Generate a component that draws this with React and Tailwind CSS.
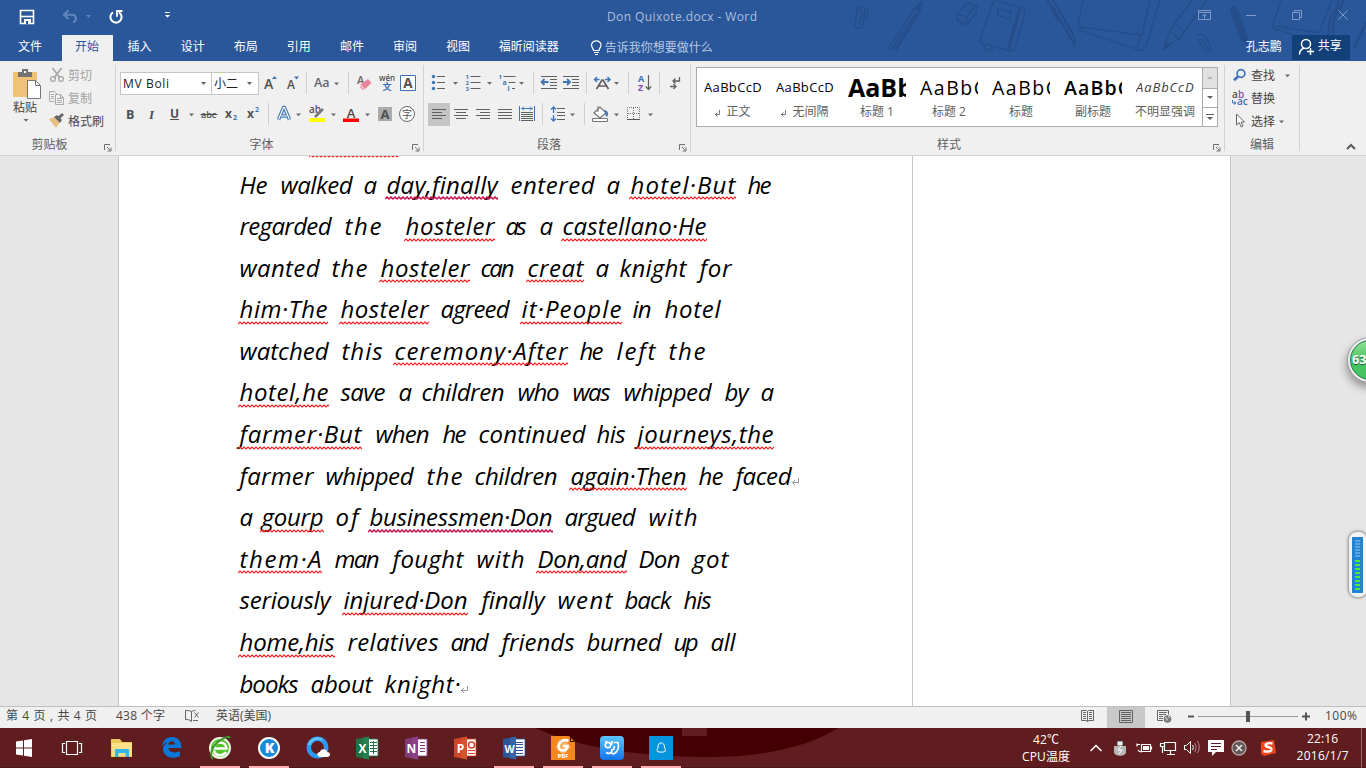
import React, { useLayoutEffect, useRef } from "react";

const UI = "font-['Open_Sans','Noto_Sans_CJK_SC',sans-serif]";

function Fit({ w, className = "", children }) {
  const ref = useRef(null);
  useLayoutEffect(() => {
    const el = ref.current;
    el.style.letterSpacing = "0px";
    const natural = el.getBoundingClientRect().width;
    const n = Math.max(1, Array.from(el.textContent).length - 1);
    el.style.letterSpacing = (w - natural) / n + "px";
  }, [w, children]);
  return (
    <span className={"inline-block shrink-0 whitespace-pre " + className} style={{ width: w }}>
      <span ref={ref} className="inline-block">{children}</span>
    </span>
  );
}

/* Icon whose drawing uses window coordinates */
function G({ x, y, w, h, children, className = "" }) {
  return (
    <svg width={w} height={h} viewBox={`${x} ${y} ${w} ${h}`} className={"block shrink-0 " + className} fill="none">
      {children}
    </svg>
  );
}
const A = (p) => <G y={70} h={27} {...p} />;
const B = (p) => <G y={101} h={26} {...p} />;

const Arrow = ({ x, y, c = "#6a6a6a" }) => <path d={`M${x - 2.5} ${y - 1}h5l-2.5 2.8z`} fill={c} />;
const VLine = ({ x, y1, y2, c = "#d0d0d0" }) => <path d={`M${x} ${y1}V${y2}`} stroke={c} />;
const Lines = ({ rows, c = "#606060" }) => (
  <path d={rows.map(([x, y, w]) => `M${x} ${y}h${w}`).join("")} stroke={c} strokeWidth="1" />
);
const Tx = ({ x, y, s = 12, c = "#505050", b, i, children, anchor, st }) => (
  <text x={x} y={y} fontSize={s} fill={c} fontWeight={b || 400} fontStyle={i ? "italic" : "normal"} textAnchor={anchor} stroke={st} fontFamily="Open Sans, Noto Sans CJK SC, sans-serif">{children}</text>
);

function Launcher() {
  return (
    <svg width="8" height="8" viewBox="0 0 8 8" fill="none" stroke="#6f6f6f">
      <path d="M.5 6V.5H6M3 3l3.500 3.500M7 3.500V7H3.500" />
    </svg>
  );
}

function GroupLabel({ label, launcher, pad = "pr-0" }) {
  return (
    <div className="mt-[9px] flex h-[18px] items-center">
      <div className={"flex-1 text-center text-[12px] leading-[18px] text-[#606060] " + pad}>{label}</div>
      {launcher && <div className="mr-[3px] mt-[5px] shrink-0"><Launcher /></div>}
    </div>
  );
}

function TitleBar() {
  return (
    <div className="relative z-10 flex h-[35px] items-center">
      <G x={0} y={0} w={180} h={35}>
        <path d="M20.500 10.500h13v13h-13z" stroke="#fff" strokeWidth="1.600" />
        <path d="M21 16.500h12" stroke="#fff" strokeWidth="1.600" />
        <path d="M24 19h7v5h-7z" fill="#fff" /><path d="M26 21h2v3h-2z" fill="#2a579a" />
        <path d="M68.500 10.500l-4.500 4.300 4.500 4.300M64.500 14.800h7.500c5 0 5 6.500 1 7.400" stroke="#6186bb" strokeWidth="2.100" />
        <path d="M86 15h5l-2.500 2.800z" fill="#6186bb" />
        <path d="M113 12.300a5.600 5.600 0 1 0 6 0" stroke="#fff" strokeWidth="2" />
        <path d="M117 16.800v-5.800h5.500" stroke="#fff" strokeWidth="1.800" />
        <path d="M165 15h5l-2.500 2.800z" fill="#fff" />
        <path d="M165 12.500h5" stroke="#fff" />
      </G>
      <Fit w={150} className="ml-[427px] mt-[-2px] text-[12px] leading-[16px] text-[#acbfdc]">Don Quixote.docx - Word</Fit>
      <G x={1190} y={0} w={170} h={35} className="ml-[433px]">
        <g stroke="#7e9bc7">
          <path d="M1198.500 10.500h12v9h-12zM1198.500 12.500h12M1204.500 18.500v-4M1202.500 16l2-2 2 2" />
          <path d="M1246 15.500h10M1292.500 12.500h7v7h-7zM1294.500 12v-1.500h7v7h-2M1338.500 10.500l9 9M1347.500 10.500l-9 9" />
        </g>
      </G>
    </div>
  );
}

function Doodles() {
  return (
    <svg className="absolute left-0 top-0" width="1366" height="61" viewBox="0 0 1366 61" fill="none" stroke="#244d8a" strokeWidth="1.300">
      <path d="M856 10c2-5 8-5 9-1l-2 16c-2 5-9 4-8-2l2-11c2-4 6-2 5 1l-2 9M868 8l-2 14" />
      <path d="M887 51l26-40 8-8-2 10-23 38M891 51l25-38M894 51l24-38" />
      <path d="M915 8l6-5-1 8z" fill="#244d8a" />
      <path d="M957 14l10-11 10 3-1 8-10 11-9-5zM957 14l10 3 9-12M967 17l-1 7" />
      <path d="M994 0l-15 42 31 9c2 0 4-1 5-3l10-35c0-3-2-5-4-6zM998 9l13 3-1 7-12-3zM983 43l3 8 3-2 4 2-4-7" />
      <path d="M1020 8l-12 42" strokeWidth="3" />
      <path d="M1047 0l18 28 10 18-1-10-21-36" strokeWidth="2" /><path d="M1052 8l8 14" strokeWidth="4" />
      <path d="M1083 0l-5 25c0 3 1 5 4 6l57 19c4 1 6-1 7-4l14-46M1080 27l62 8 8-35M1140 35l-3 14" />
      <path d="M1192 0l-22 30-6 18 16-10 27-38M1170 31l9 8M1175 24l10 8" /><path d="M1166 43l-1 6 5-4z" fill="#244d8a" />
      <path d="M1197 36c2-3 7-2 9 2l5 10c0 4-5 4-7 1l-6-10M1201 38l6 10" />
      <path d="M1234 10l10 28" strokeWidth="8" strokeLinecap="round" /><path d="M1244 36l6 15" strokeWidth="3" />
      <path d="M1281 0l-8 24c-1 3 1 5 5 6l50 15M1276 26l43 7 13-33" />
      <path d="M1338 0c2 12-10 13-9 25s-5 18-3 30M1343 0c-3 13-11 15-10 27s-4 18-3 30M1366 22l-12 27" strokeWidth="2" />
    </svg>
  );
}

const tabs = ["插入", "设计", "布局", "引用", "邮件", "审阅", "视图"];

function Header() {
  return (
    <header className="relative h-[61px] bg-[#2a579a]">
      <Doodles />
      <TitleBar />
      <nav className="relative z-10 flex h-[26px] text-[12px] leading-[24px] text-white">
        <div className="w-[62px] shrink-0 pr-[2px] text-center">文件</div>
        <div className="w-[51px] shrink-0 bg-[#f0f0f0] pr-px text-center text-[#2a579a]">开始</div>
        {tabs.map((t) => <div key={t} className="w-[53.100px] shrink-0 text-center">{t}</div>)}
        <div className="ml-[14px] w-[76px] shrink-0">福昕阅读器</div>
        <G x={576} y={35} w={29} h={26} className="ml-[14px] -translate-x-[10px]">
          <path d="M600.500 50.500c0-2-2-3-2-5.500a4.800 4.800 0 0 1 9.500 0c0 2.500-2 3.500-2 5.500z" stroke="none" />
          <path d="M590.500 50.500c0-2-2-3-2-5.500a4.800 4.800 0 0 1 9.500 0c0 2.500-2 3.500-2 5.500z" stroke="#fff" strokeWidth="1.200" />
          <path d="M591 52.500h5M592 54.500h3" stroke="#fff" strokeWidth="1.200" />
        </G>
        <div className="-ml-[13px] mt-[1px] w-[641px] shrink-0 text-[#b9cae4]">告诉我你想要做什么</div>
        <div className="w-[46px] shrink-0">孔志鹏</div>
        <div className="flex h-[25px] w-[58px] shrink-0 bg-[#124078]">
          <G x={1292} y={35} w={26} h={25}>
            <circle cx="1306" cy="44" r="4.500" stroke="#fff" strokeWidth="1.500" />
            <path d="M1299.500 54.500c0-4 2-5.500 4.500-6.500M1307 51.500h7M1310.500 48v7" stroke="#fff" strokeWidth="1.500" />
          </G>
          <span className="leading-[21px]">共享</span>
        </div>
      </nav>
    </header>
  );
}

function ClipboardGroup() {
  return (
    <div className="h-[94px] w-[115px] shrink-0">
      <div className="flex h-[66px]">
        <div className="flex w-[48px] flex-col items-center pt-[6px] text-[12px] text-[#444]">
          <G x={0} y={67} w={48} h={34}>
            <path d="M13 72h24v25H13z" fill="#eec377" />
            <path d="M18 72h14v5H18z" fill="#737373" /><path d="M22 69h6v4h-6z" fill="#737373" /><path d="M24 71h2v2h-2z" fill="#fff" />
            <path d="M27.500 80.500h8l5 5v13h-13z" fill="#fff" stroke="#777" /><path d="M35.500 80.500v5h5" stroke="#777" />
          </G>
          <div className="mr-[-2px] mt-[-1px] leading-[16px]">粘贴</div>
          <G x={18} y={118} w={16} h={8} className="mr-[-4px]"><Arrow x={26} y={122} /></G>
        </div>
        <div className="flex w-[67px] flex-col pt-[3px] text-[12px] leading-[23px]">
          <div className="flex h-[23px] text-[#a2a2a2]">
            <G x={48} y={64} w={20} h={23}><path d="M52.500 68l7.500 10M61.500 68L54 78" stroke="#a9a9a9" strokeWidth="1.800" /><circle cx="53" cy="79" r="2.400" stroke="#a9a9a9" strokeWidth="1.300" /><circle cx="61" cy="79" r="2.400" stroke="#a9a9a9" strokeWidth="1.300" /></G>剪切
          </div>
          <div className="flex h-[23px] text-[#a2a2a2]">
            <G x={48} y={87} w={20} h={23}><g stroke="#ababab"><path d="M54.500 101.500h-5v-10h5l3 3M51 94.500h3M51 96.500h3M51 98.500h3" /><path d="M55.500 94.500h5l3 3v7h-8zM57 98.500h5M57 100.500h5M57 102.500h5M60.500 94.500v3h3" fill="#f0f0f0" /></g></G>复制
          </div>
          <div className="flex h-[23px] text-[#444]">
            <G x={48} y={110} w={20} h={23}><path d="M49 119l6-2 5 5-4 6c-2-3-5-6-7-9z" fill="#e8bf80" /><path d="M54 117l3-2 5 5-2 3z" fill="#666" /><path d="M58.500 118l4.500-4" stroke="#666" strokeWidth="3" /></G>格式刷
          </div>
        </div>
      </div>
      <GroupLabel label="剪贴板" launcher pad="pr-[5px]" />
    </div>
  );
}

function FontGroup() {
  return (
    <div className="h-[94px] w-[307px] shrink-0 pt-[9px]">
      <div className="flex h-[27px] items-center">
        <div className="ml-[4px] flex h-[23px] w-[92px] shrink-0 items-center border border-[#c6c6c6] bg-white pl-[2px] text-[12px] text-[#222]">
          <Fit w={46} className="leading-[16px]">MV Boli</Fit>
          <svg className="ml-[31px] shrink-0" width="7" height="4"><path d="M1 0h5L3.500 3z" fill="#666" /></svg>
        </div>
        <div className="flex h-[23px] w-[47px] shrink-0 items-center border border-l-0 border-[#c6c6c6] bg-white pl-[2px] text-[12px] text-[#222]">
          <span className="w-[32px]">小二</span>
          <svg width="7" height="4"><path d="M1 0h5L3.500 3z" fill="#666" /></svg>
        </div>
        <A x={259} w={24}><Tx x={264} y={89} s={14} b={600}>A</Tx><path d="M272 79h5l-2.500-3z" fill="#3f74b5" /></A>
        <A x={283} w={26}><Tx x={287} y={89} s={12} b={600}>A</Tx><path d="M294 76.500h5l-2.500 3z" fill="#3f74b5" /><VLine x={306.500} y1={72} y2={94} /></A>
        <A x={309} w={45}><Tx x={314} y={87} s={12.500} b={600} c="#666">Aa</Tx><Arrow x={336.500} y={83.500} /><VLine x={348.500} y1={72} y2={94} /></A>
        <A x={354} w={22}><Tx x={357} y={84} s={11} b={600} c="#666">A</Tx><path d="M361 84l7-5 3.500 4-7 6.500-2.500 0-2-2.500z" fill="#e8839a" /><path d="M360 84.500l4.500 5" stroke="#f6ccd4" strokeWidth="1.500" /></A>
        <A x={376} w={22}><Tx x={387} y={81} s={8} anchor="middle" b={600}>wén</Tx><Tx x={387} y={90} s={9} anchor="middle" b={700} c="#3f74b5">文</Tx></A>
        <A x={398} w={22}><path d="M400.500 75.500h15v15h-15z" fill="#fff" stroke="#3f74b5" /><Tx x={408} y={88} s={13.500} anchor="middle" b={700}>A</Tx></A>
      </div>
      <div className="mt-[4px] flex h-[26px]">
        <B x={116} w={26}><Tx x={126} y={118.500} s={12.500} b={700}>B</Tx></B>
        <B x={142} w={22}><text x="149" y="118.500" fontSize="13" fontWeight="700" fontStyle="italic" fill="#505050" fontFamily="Liberation Serif, serif">I</text></B>
        <B x={164} w={34}><Tx x={170} y={118} s={12} b={700}>U</Tx><Lines rows={[[170, 119.500, 9]]} c="#505050" /><Arrow x={191.500} y={114.500} /></B>
        <B x={198} w={24}><Tx x={201} y={118} s={9} b={600}>abc</Tx><Lines rows={[[200.500, 114.500, 17]]} c="#505050" /></B>
        <B x={222} w={22}><Tx x={225} y={118} s={12} b={700}>x</Tx><Tx x={233} y={120} s={7} b={700} c="#3f74b5">2</Tx></B>
        <B x={244} w={28}><Tx x={247} y={118} s={12} b={700}>x</Tx><Tx x={255} y={112} s={7} b={700} c="#3f74b5">2</Tx><VLine x={268.500} y1={103} y2={125} /></B>
        <B x={272} w={34}><path d="M278.500 120l5.500-13 5.500 13M280.500 116h7" stroke="#b4d0f0" strokeWidth="4" strokeLinejoin="round" /><path d="M278.500 119.500l5-12h1l5 12M281 116h6" stroke="#3a6ea8" strokeWidth="3.200" strokeLinejoin="round" /><path d="M278.500 119.500l5-12h1l5 12M281 116h6" stroke="#fff" strokeWidth="1.200" /><Arrow x={298.500} y={114.500} /></B>
        <B x={306} w={34}><Tx x={309} y={113} s={10} b={600}>ab</Tx><path d="M315 117l8-8" stroke="#777" strokeWidth="2.500" /><path d="M309 118h16v4h-16z" fill="#ff0" /><Arrow x={333.500} y={114.500} /></B>
        <B x={340} w={36}><Tx x={351} y={117.500} s={13} b={600} anchor="middle">A</Tx><path d="M343 118.500h16v3.500h-16z" fill="#f00" /><Arrow x={367.500} y={114.500} /></B>
        <B x={376} w={20}><path d="M378 107h14v14h-14z" fill="#ababab" /><Tx x={385} y={118.500} s={13} b={700} anchor="middle">A</Tx></B>
        <B x={396} w={24}><circle cx="407" cy="114" r="7.500" fill="#fff" stroke="#666" /><Tx x={407} y={117.800} s={10} anchor="middle">字</Tx></B>
      </div>
      <GroupLabel label="字体" launcher pad="pr-[5px]" />
    </div>
  );
}

const blue = "#3f74b5";
function ParagraphGroup() {
  return (
    <div className="h-[94px] w-[266px] shrink-0 pt-[9px]">
      <div className="flex h-[27px]">
        <A x={424} w={38}><Lines rows={[[437, 76.500, 8], [437, 82.500, 8], [437, 88.500, 8]]} />{[76.500, 82.500, 88.500].map((y) => <circle key={y} cx="433.500" cy={y} r="1.700" fill={blue} />)}<Arrow x={455.500} y={83} /></A>
        <A x={462} w={34}><Lines rows={[[470.500, 76.500, 10], [470.500, 82.500, 10], [470.500, 88.500, 10]]} /><Tx x={465.500} y={79} s={6} b={700} c={blue}>1</Tx><Tx x={465.500} y={85} s={6} b={700} c={blue}>2</Tx><Tx x={465.500} y={91} s={6} b={700} c={blue}>3</Tx><Arrow x={489.500} y={83} /></A>
        <A x={496} w={40}><Lines rows={[[503.500, 76.500, 12], [508.500, 82.500, 7], [512, 88.500, 3]]} /><Tx x={498.500} y={79} s={6} b={700} c={blue}>1</Tx><Tx x={502.500} y={84.500} s={7} b={700} c={blue}>a</Tx><Tx x={507.500} y={90.500} s={7} b={700} c={blue}>i</Tx><Arrow x={521.500} y={83} /><VLine x={533.500} y1={72} y2={94} /></A>
        <A x={536} w={25}><Lines rows={[[541, 76.500, 16], [550, 79.500, 7], [550, 82.500, 7], [550, 85.500, 7], [541, 88.500, 16]]} /><path d="M541.500 82h7M544.500 79l-3 3 3 3" stroke={blue} strokeWidth="1.800" /></A>
        <A x={561} w={28}><Lines rows={[[563, 76.500, 16], [572, 79.500, 7], [572, 82.500, 7], [572, 85.500, 7], [563, 88.500, 16]]} /><path d="M563 82h7M567 79l3 3-3 3" stroke={blue} strokeWidth="1.800" /><VLine x={586.500} y1={72} y2={94} /></A>
        <A x={589} w={42}><path d="M596.500 89l5.500-9h1l5.500 9M598.500 86h8" stroke="#606060" strokeWidth="1.700" /><path d="M594.500 79.500h5M597 77l-2.500 2.500L597 82M605 79.500h5M607.500 77l2.500 2.500-2.500 2.500" stroke={blue} strokeWidth="1.400" /><Arrow x={616.500} y={83} /><VLine x={628.500} y1={72} y2={94} /></A>
        <A x={631} w={31}><Tx x={638} y={81.500} s={9} b={700} c={blue}>A</Tx><Tx x={638} y={90.500} s={9} b={700} c="#8c4fa8">Z</Tx><path d="M648.500 75v14M645.800 86.500l2.700 3 2.700-3" stroke="#606060" strokeWidth="1.200" /><VLine x={659.500} y1={72} y2={94} /></A>
        <A x={662} w={28}><path d="M679.500 77v4h-6M675.500 78.500l-2.500 2.500 2.500 2.500M670 86.500h6M673.500 84l2.500 2.500-2.500 2.500" stroke="#606060" strokeWidth="1.300" /></A>
      </div>
      <div className="mt-[4px] flex h-[26px]">
        <B x={424} w={27}><path d="M428 103h22v23h-22z" fill="#c5c5c5" /><Lines rows={[[432, 109.500, 14], [432, 112.500, 10], [432, 115.500, 14], [432, 118.500, 10]]} /></B>
        <B x={451} w={22}><Lines rows={[[454, 109.500, 14], [456, 112.500, 10], [454, 115.500, 14], [456, 118.500, 10]]} /></B>
        <B x={473} w={22}><Lines rows={[[476, 109.500, 14], [480, 112.500, 10], [476, 115.500, 14], [480, 118.500, 10]]} /></B>
        <B x={495} w={22}><Lines rows={[[498, 109.500, 14], [498, 112.500, 14], [498, 115.500, 14], [498, 118.500, 14]]} /></B>
        <B x={517} w={29}><Lines rows={[[521, 112.500, 12], [521, 114.500, 12], [521, 116.500, 12], [521, 118.500, 12], [521, 120.500, 12]]} /><path d="M519.500 106v15M534.500 106v15M521.500 108.500h11M524 106.500l-2 2 2 2M530 106.500l2 2-2 2" stroke={blue} /><VLine x={542.500} y1={103} y2={125} /></B>
        <B x={546} w={41}><path d="M553.500 107v14M551 109.500l2.500-2.500 2.500 2.500M551 118.500l2.500 2.500 2.500-2.500" stroke={blue} strokeWidth="1.300" /><path d="M552 114h3" stroke="#f0f0f0" strokeWidth="2" /><Lines rows={[[557, 108.500, 8], [557, 112.500, 8], [557, 115.500, 8], [557, 119.500, 8]]} /><Arrow x={572.500} y={114.500} /><VLine x={584.500} y1={103} y2={125} /></B>
        <B x={587} w={36}><path d="M594 113l6-6 6 6-6 5z" fill="#fff" stroke="#707070" strokeWidth="1.200" /><path d="M598 106v6" stroke="#707070" /><path d="M604 110c4 0 5 4 3 7-2-1-1-4-3-7z" fill={blue} /><path d="M592.500 118.500h15v3h-15z" fill="#fff" stroke="#777" /><Arrow x={616.500} y={114.500} /></B>
        <B x={623} w={40}><path d="M627.500 120V107.500h12V120M633.500 108v11M628 113.500h11" stroke="#777" strokeDasharray="1 1" /><path d="M627 119.500h13" stroke="#555" /><Arrow x={650.500} y={114.500} /></B>
      </div>
      <GroupLabel label="段落" launcher pad="pr-[5px]" />
    </div>
  );
}

const styleItems = [
  ["正文", "AaBbCcDd", "text-[13px] text-black", 66, 1],
  ["无间隔", "AaBbCcDd", "text-[13px] text-black", 66, 1],
  ["标题 1", "AaBb", "text-[25px] font-bold text-black", 65],
  ["标题 2", "AaBbC", "text-[19.500px] text-black", 66],
  ["标题", "AaBbC", "text-[19.500px] text-black", 66],
  ["副标题", "AaBbC", "text-[19.500px] font-semibold text-black", 66],
  ["不明显强调", "AaBbCcDd", "text-[13px] italic text-[#404040]", 66],
];

function StylesGroup() {
  return (
    <div className="h-[94px] w-[533px] shrink-0 pt-[6px]">
      <div className="ml-[5px] flex h-[60px] w-[522px] border border-[#ababab] bg-white">
        <div className="flex w-[505px]">
          {styleItems.map(([n, p, c, w, mark], i) => (
            <div key={i} className="flex w-[72px] shrink-0 flex-col">
              <div className={"ml-[7px] flex h-[33px] w-[58px] shrink-0 items-center overflow-hidden pt-[6px] leading-[27px] " + c}><Fit w={w}>{p}</Fit></div>
              <div className="flex items-center justify-center whitespace-nowrap text-center text-[12px] leading-[21px] text-[#606060]">
                {mark && <svg className="mr-[5px] mt-[3px]" width="6" height="7" fill="none" stroke="#777"><path d="M4.500 0v4.500h-4M2.500 2.500l-2 2 2 2" /></svg>}
                {n}
              </div>
            </div>
          ))}
        </div>
        <div className="flex w-[15px] flex-col border-l border-[#ababab]">
          <div className="flex h-[20px] items-center justify-center bg-[#e1e1e1]"><svg width="6" height="4"><path d="M0 3h6L3 0z" fill="#b5b5b5" /></svg></div>
          <div className="flex h-[19px] items-center justify-center border-t border-[#ababab]"><svg width="6" height="4"><path d="M0 0h6L3 3z" fill="#606060" /></svg></div>
          <div className="flex h-[19px] items-center justify-center border-t border-[#ababab]"><svg width="8" height="7"><path d="M0 0h8v1H0zM1 3h6L4 6z" fill="#606060" /></svg></div>
        </div>
      </div>
      <GroupLabel label="样式" launcher pad="pr-[6px]" />
    </div>
  );
}

function EditGroup() {
  return (
    <div className="h-[94px] w-[74px] shrink-0 pt-[3px] text-[12px] leading-[23px] text-[#444]">
      <div className="flex h-[23px]">
        <G x={1225} y={64} w={26} h={23}><circle cx="1241" cy="73.500" r="3.900" stroke={blue} strokeWidth="1.700" /><path d="M1238 76.500l-4 3.800" stroke={blue} strokeWidth="2.600" /></G>查找
        <G x={1275} y={64} w={20} h={23}><Arrow x={1287.500} y={75.500} /></G>
      </div>
      <div className="flex h-[23px]">
        <G x={1225} y={87} w={26} h={23}><Tx x={1232} y={97.500} s={10} b={600}>a</Tx><Tx x={1238} y={97.500} s={10} b={600} c="#8c4fa8">b</Tx><Tx x={1237} y={105} s={10} b={600} c={blue}>ac</Tx><path d="M1232.500 100v3h3M1234 101.500l2 1.500-2 1.500" stroke={blue} /></G>替换
      </div>
      <div className="flex h-[23px]">
        <G x={1225} y={110} w={26} h={23}><path d="M1236.500 114v11l2.700-2.500 2 4.500 1.800-1-2-4h3.500z" fill="#fff" stroke="#666" /></G>选择
        <G x={1275} y={110} w={20} h={23}><Arrow x={1281.500} y={121.500} /></G>
      </div>
      <div className="mt-[3px] text-center leading-[18px] text-[#606060]">编辑</div>
    </div>
  );
}

const Sep = () => <div className="mt-[4px] h-[86px] w-px shrink-0 bg-[#d2d2d2]" />;

function Ribbon() {
  return (
    <div className="flex h-[95px] border-b border-[#d0d0d0] bg-[#f0f0f0]">
      <ClipboardGroup /><Sep /><FontGroup /><Sep /><ParagraphGroup /><Sep /><StylesGroup /><Sep /><EditGroup /><Sep />
      <div className="ml-[46px] mt-[82px]"><svg width="10" height="8" fill="none" stroke="#5a5a5a" strokeWidth="2"><path d="M1 6l4-4 4 4" /></svg></div>
    </div>
  );
}

/* word, left edge, right edge, spelling mark */
const doc = [
  [["He", 240, 268], ["walked", 281, 353], ["a", 364, 376], ["day,finally", 387, 498, 2], ["entered", 511, 595], ["a", 607, 618], ["hotel·But", 631, 736, 1], ["he", 748, 772]],
  [["regarded", 240, 332], ["the", 345, 382], ["hosteler", 406, 495, 1], ["as", 506, 527], ["a", 540, 551], ["castellano·He", 563, 707, 1]],
  [["wanted", 240, 320], ["the", 332, 368], ["hosteler", 381, 470, 1], ["can", 481, 515], ["creat", 528, 584, 1], ["a", 596, 607], ["knight", 620, 687], ["for", 700, 732]],
  [["him·The", 240, 328, 1], ["hosteler", 341, 429, 1], ["agreed", 441, 510], ["it·People", 522, 622, 1], ["in", 633, 652], ["hotel", 665, 721]],
  [["watched", 240, 329], ["this", 342, 383], ["ceremony·After", 395, 568, 1], ["he", 580, 604], ["left", 617, 656], ["the", 669, 706]],
  [["hotel,he", 240, 329, 1], ["save", 341, 386], ["a", 399, 410], ["children", 422, 505], ["who", 518, 560], ["was", 573, 611], ["whipped", 624, 712], ["by", 725, 749], ["a", 761, 773]],
  [["farmer·But", 240, 362, 1], ["when", 376, 430], ["he", 443, 467], ["continued", 479, 586], ["his", 597, 626], ["journeys,the", 638, 774, 1]],
  [["farmer", 240, 314], ["whipped", 326, 414], ["the", 427, 463], ["children", 475, 558], ["again·Then", 571, 687, 1], ["he", 699, 724], ["faced", 736, 792], ["↵"]],
  [["a", 240, 251], ["gourp", 262, 324, 1], ["of", 336, 359], ["businessmen·Don", 370, 553, 2], ["argued", 565, 636], ["with", 649, 698]],
  [["them·A", 240, 322, 1], ["man", 335, 380], ["fought", 393, 464], ["with", 477, 525], ["Don,and", 538, 627, 1], ["Don", 639, 681], ["got", 693, 729]],
  [["seriously", 240, 331], ["injured·Don", 344, 468, 1], ["finally", 482, 545], ["went", 558, 613], ["back", 625, 672], ["his", 684, 712]],
  [["home,his", 240, 335, 1], ["relatives", 348, 439], ["and", 451, 489], ["friends", 502, 575], ["burned", 587, 662], ["up", 674, 699], ["all", 711, 736]],
  [["books", 240, 299], ["about", 311, 373], ["knight·", 385, 461], ["↵"]],
];

function Squiggle({ w, kind, className = "" }) {
  let d = "M0 3";
  for (let x = 0; x < w; x += 4) d += "l2 -2l2 2";
  return (
    <svg width={w} height="5" className={"block " + className} fill="none" strokeWidth={kind === 2 ? 1.5 : 1.1}>
      <path d={d} stroke={kind === 2 ? "#c6134f" : "#f52020"} />
    </svg>
  );
}

function DocLine({ words }) {
  let end = 119.5;
  return (
    <div className="flex h-[41.600px] leading-[41.600px]">
      {words.map(([t, a, b, mark], i) => {
        if (t === "↵") {
          return <svg key={i} width="8" height="8" className="mt-[23px]" fill="none" stroke="#999"><path d="M6.500 0v4.500h-6M3 2L.500 4.500 3 7" /></svg>;
        }
        const gap = a - end;
        end = b;
        return (
          <div key={i} className="relative shrink-0" style={{ marginLeft: gap }}>
            <Fit w={b - a}>{t}</Fit>
            {mark && <Squiggle w={b - a + 2} kind={mark} className="absolute -left-[1.500px] top-[32.500px]" />}
          </div>
        );
      })}
    </div>
  );
}

function Document() {
  return (
    <main className="relative flex h-[550px] overflow-hidden bg-[#e6e6e6]">
      <div className="ml-[118px] flex w-[1113px] border-x border-[#c6c6c6] bg-white">
        <div className="w-[794px] border-r border-[#c6c6c6] font-['Open_Sans',sans-serif] text-[24px] font-medium italic text-black">
          <div className="h-[7.500px] overflow-hidden"><Squiggle w={90} kind={1} className="-mt-[2px] ml-[190px]" /></div>
          {doc.map((l, i) => <DocLine key={i} words={l} />)}
        </div>
      </div>
      <div className="absolute left-[1347px] top-[181px] h-[46px] w-[46px] rounded-full border border-[#999] bg-[#eee] p-[2px] shadow-[-1px_5px_8px_rgba(0,0,0,.35)]">
        <div className="h-full w-full rounded-full border border-[#1a7a50] bg-gradient-to-b from-[#8ee08f] via-[#47c565] to-[#48c35e] pl-px text-[12.500px] font-bold leading-[37px] text-white [text-shadow:0_1px_1px_#17633a]">63</div>
      </div>
      <div className="absolute left-[1348px] top-[375px] h-[67px] w-[20px] rounded-[9px] border border-[#aaa] bg-[#f3f3f3] pl-[3px] pt-[5px] shadow-[0_0_3px_rgba(0,0,0,.4)]">
        <div className="flex h-[56px] w-[11px] flex-col items-center bg-[#2283d3] pt-[3px]">
          {Array.from({ length: 6 }, (_, i) => <div key={i} className="mb-[1px] h-[2px] w-[5px] bg-[#5ba6e2]" />)}
          {Array.from({ length: 8 }, (_, i) => <div key={i} className="mt-[2px] h-[2px] w-[5px] bg-[#4ff312]" />)}
        </div>
      </div>
    </main>
  );
}

function StatusBar() {
  return (
    <div className="flex h-[22px] border-t border-[#c0c0c0] bg-[#f0f0f0] text-[12px] leading-[18px] text-[#484848]">
      <Fit w={91} className="ml-[6px]">第 4 页 , 共 4 页</Fit>
      <Fit w={49} className="ml-[19px]">438 个字</Fit>
      <G x={184} y={707} w={32} h={21} className="ml-[19px]">
        <g stroke="#666"><path d="M191.500 721.500v-10c-2-1-4-1-6-1v9c2 0 4 0 6 2zM191.500 711.500c2-1 3-1 4-1M193 720.500h5M194.500 712.500l4 5M198.500 712.500l-4 5" /></g>
      </G>
      <Fit w={55}>英语(美国)</Fit>
      <G x={1076} y={707} w={31} h={21} className="ml-[805px]">
        <g stroke="#666"><path d="M1081.500 710.500h5l1 1 1-1h5v10h-5l-1 1.500-1-1.500h-5zM1087.500 711v10M1083 712.500h3M1083 714.500h3M1083 716.500h3M1083 718.500h3M1089 712.500h3M1089 714.500h3M1089 716.500h3M1089 718.500h3" /></g>
      </G>
      <G x={1107} y={707} w={38} h={21} className="bg-[#c8c8c8]">
        <path d="M1119.500 710.500h13v12h-13zM1121 712.500h10M1121 714.500h10M1121 716.500h10M1121 718.500h10M1121 720.500h10" stroke="#606060" />
      </G>
      <G x={1145} y={707} w={175} h={21}>
        <path d="M1163 720.500h-5.500v-10h11v4M1159 712.500h8M1159 714.500h7M1159 716.500h4M1159 718.500h4" stroke="#666" />
        <circle cx="1167.500" cy="719" r="3.800" fill="#777" /><path d="M1165 717.500l2 1v2M1168 716l2 2" stroke="#eee" />
        <path d="M1188 716.500h6M1302 716.500h8M1306 712.500v8" stroke="#555" strokeWidth="2" />
        <path d="M1198 716.500h100" stroke="#999" /><path d="M1246 711h4v11h-4z" fill="#555" />
      </G>
      <Fit w={32} className="ml-[5px]">100%</Fit>
    </div>
  );
}

const Office = ({ x, c, d, l, children }) => (
  <>
    <path d={`M${x + 12} ${739}h10v17h-10z`} fill="#fff" stroke={c} strokeWidth=".8" />
    {children}
    <path d={`M${x} 739l13-2.500v23L${x} 757z`} fill={c} /><path d={`M${x + 7} 737.700l6-1.200v23l-6-1.200z`} fill={d} opacity=".5" />
    <Tx x={x + 6.500} y={752.500} s={l === "W" ? 10.5 : 12} b={700} c="#fff" anchor="middle">{l}</Tx>
  </>
);

const apps = [
  ["start", 48, 0, <><path d="M16 741.500l7-1v7h-7zM24 740.300l8-1.200v8.400h-8zM16 748.500h7v7l-7-1zM24 748.500h8v8.400l-8-1.200z" fill="#fff" /></>],
  ["tasks", 49, 0, <path d="M66.500 741.500h11v13h-11zM65 743.500h-2.500v9H65M79 743.500h2.500v9H79" stroke="#fff" strokeWidth="1.200" />],
  ["files", 49, 0, <><path d="M111 739h9l2 3h10v15h-21z" fill="#f0c95d" /><path d="M112 743h20v13h-20z" fill="#fce08a" /><path d="M115 757v-8h14v8h-3.500v-4h-7v4z" fill="#35b5ea" /></>],
  ["edge", 49, 0, <path d="M162 746c1-6 5-9 10-9 6 0 9.500 4 9.500 11h-13c0 4 6 6 11.500 3v5c-7 4-17 1-17-7 0-3 2-5 4.500-6.500-2 .2-4 1.500-5.500 3.500zM168 744.500h7c0-4.500-6-4.500-7 0z" fill="#0b78d8" />],
  ["browser", 49, 1, <><circle cx="220" cy="748" r="10" fill="#53c22b" stroke="#eef8e8" strokeWidth="2" /><path d="M226.500 748.500H214c0-8 12-8 12.500 0zM214 750.500c1 6 9 6 12 1.500" stroke="#fff" strokeWidth="2.500" /><path d="M213 759c-4-4-1-12 5-17s11-6 12-4" stroke="#38952a" strokeWidth="1.800" /></>],
  ["kugou", 49, 1, <><circle cx="269" cy="748" r="10" fill="#168bd8" stroke="#fff" strokeWidth="2" /><Tx x={269.500} y={753} s={14} b={800} c="#fff" anchor="middle">K</Tx></>],
  ["qq", 49, 0, <><circle cx="317.500" cy="747.500" r="8.700" stroke="#2e97f5" strokeWidth="4.500" /><path d="M309 745c2-6 8-8 13-5" stroke="#65c4ff" strokeWidth="2.500" /><path d="M320 757c-4-1-3-5 0-5 1-4 7-3 7 0 4 0 4 5 0 5z" fill="#fff" /></>],
  ["excel", 49, 0, <Office x={356} c="#1f7244" d="#2e8b58" l="X"><path d="M370 742.500h7M370 745.500h7M370 748.500h7M370 751.500h7M373.500 741v13" stroke="#1f7244" /></Office>],
  ["note", 49, 0, <Office x={405} c="#80397b" d="#924a8c" l="N"><path d="M420 742.500h5M420 745.500h5M420 748.500h5M420 751.500h5" stroke="#80397b" /><path d="M427.500 739v17" stroke="#80397b" strokeDasharray="4 1" /></Office>],
  ["ppt", 49, 0, <Office x={454} c="#d04525" d="#e05c35" l="P"><path d="M468 750.500h7M468 753.500h7" stroke="#d04525" /><circle cx="471.500" cy="745" r="3" stroke="#d04525" strokeWidth="1.500" /></Office>],
  ["word", 49, 1, <Office x={503} c="#2a5699" d="#3d6fb5" l="W"><path d="M516 742.500h7M516 744.500h7M516 747.500h7M516 750.500h7M516 753.500h7" stroke="#2a5699" /></Office>],
  ["foxit", 49, 1, <><path d="M551 736h18l6 6v18h-24z" fill="#f5871f" /><path d="M570.500 736.500v5h4" stroke="#301000" /><path d="M556 747l7-8 8 8-8 8z" fill="#f9b069" /><path d="M568.500 741c-5-2.500-10 1-10 5.500 0 5 8 6 9-.5h-4.500" stroke="#fff" strokeWidth="2.600" /><Tx x={563} y={758} s={5.500} b={800} c="#fff" anchor="middle">PDF</Tx></>],
  ["social", 49, 1, <><defs><linearGradient id="sg" x2="0" y2="1"><stop stopColor="#5cc5ff" /><stop offset="1" stopColor="#1274ea" /></linearGradient></defs><rect x="600" y="736" width="24" height="24" rx="4" fill="url(#sg)" /><circle cx="608" cy="745" r="2.700" stroke="#fff" strokeWidth="1.700" /><path d="M605.500 741l1.500 1.500M606 752.500c3 2 6.500.5 6-3.500M612 741l-.5 4M613.500 742.500h4.500c1.500 5-.5 9.500-4.500 11.500l-3-1.500M614.500 746l-1 4" stroke="#fff" strokeWidth="1.700" /></>],
  ["bell", 49, 1, <><path d="M649 736h24v24h-24z" fill="#0794df" /><path d="M657.500 751.500c-1.500-1 .5-2.500.5-4.500 0-5.500 6.500-5.500 6.500 0 0 2 2 3.500.5 4.500-2 .9-5.500.9-7.500 0z" stroke="#fff" /></>],
];

function Taskbar() {
  let left = 0;
  return (
    <footer className="relative h-[40px] overflow-hidden bg-[#5f1d1f]">
      <svg className="absolute left-0 top-0" width="1366" height="40" viewBox="0 728 1366 40"><path d="M535 728c45 20 105 29 175 29 60 0 103-13 128-29z" fill="#430002" /><path d="M682 728h25v8h-25z" fill="#5f1d1f" /><path d="M0 767.500h1366" stroke="#4d1719" /></svg>
      <div className="relative flex h-full">
        {apps.map(([id, w, on, icon]) => {
          const x = left;
          left += w;
          return (
            <div key={id} className="flex shrink-0 flex-col items-center">
              <G x={x} y={728} w={w} h={38}>{icon}</G>
              {on ? <div className="ml-px h-[2px] w-[40px] bg-[#ffb0b0]" /> : null}
            </div>
          );
        })}
        <div className="ml-[337px] flex w-[48px] shrink-0 flex-col items-center pt-[3px] text-[12px] leading-[17px] text-white">
          <Fit w={26}>42℃</Fit><Fit w={48}>CPU温度</Fit>
        </div>
        <G x={1080} y={728} w={212} h={40} className="ml-[10px]">
          <path d="M1090.500 751l5.500-5.500 5.500 5.500" stroke="#fff" strokeWidth="1.500" />
          <path d="M1117 741h6v5h-6z" fill="#eee" stroke="#444" /><path d="M1114 746h12v6c0 5-12 5-12 0z" fill="#b8b8b8" /><path d="M1121 746l-3 4h4l-3 4" stroke="#fff" />
          <path d="M1141.500 744.500h9v7h-9zM1151.500 746.500v3M1137 744.500h3M1137 746.500v-3M1138 750c1 2 2 2 4 2" stroke="#fff" strokeWidth="1.200" /><path d="M1143 746h6v4h-6z" fill="#fff" />
          <path d="M1164.500 742.500h11v8h-11zM1167 754.500h8M1170.500 751v3M1160.500 743.500h4v3h-4zM1162.500 747v6" stroke="#fff" strokeWidth="1.200" />
          <path d="M1184.500 745.500h2l4-4v12l-4-4h-2zM1192.500 745c1 1 1 4 0 5" stroke="#fff" /><path d="M1194.500 743c2 2 2 7 0 9M1197 741c3 3 3 9 0 12" stroke="#b89092" />
          <path d="M1208 740h16v12h-8l-4 4v-4h-4z" fill="#fff" /><path d="M1211 743.500h10M1211 746.500h10M1211 749.500h6" stroke="#5f1d1f" />
          <circle cx="1239" cy="748" r="7" fill="#655757" stroke="#b8a4a4" strokeWidth="1.300" /><path d="M1236 745l6 6M1242 745l-6 6" stroke="#eee" strokeWidth="1.500" />
          <path d="M1261 742l13-2 2 13-12 3-3-2z" fill="#f0441d" /><path d="M1272.500 743.500c-4-1-7 0-7 2s6.500 1 6 4c-.5 2.500-5 2.500-8 1.500" stroke="#fff" strokeWidth="2.400" />
        </G>
        <div className="ml-[4px] flex w-[53px] shrink-0 flex-col items-center pt-[2px] text-[12px] leading-[17px] text-white">
          <Fit w={31}>22:16</Fit><Fit w={52}>2016/1/7</Fit>
        </div>
        <div className="ml-[12px] h-full w-px bg-[#96696a]" />
      </div>
    </footer>
  );
}

export default function App() {
  return (
    <div className={"h-[768px] w-[1366px] overflow-hidden " + UI}>
      <Header />
      <Ribbon />
      <Document />
      <StatusBar />
      <Taskbar />
    </div>
  );
}
